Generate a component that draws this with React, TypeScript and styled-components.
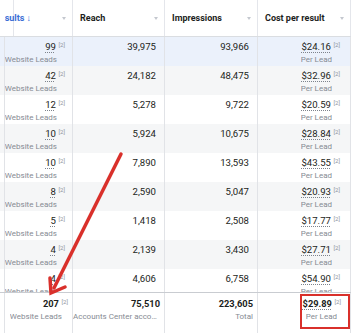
import styled, { createGlobalStyle } from "styled-components"

const GlobalStyle = createGlobalStyle`
  html, body {
    margin: 0;
    padding: 0;
    background: #fff;
  }
  body {
    font-family: Roboto, "Liberation Sans", Arial, sans-serif;
    width: 356px;
    height: 333px;
    overflow: hidden;
  }
`

const COLS = "5px 68px 92px 93px 93px"

const Page = styled.div`
  position: relative;
  width: 356px;
  height: 333px;
  overflow: hidden;
  background: #fff;
`

const Table = styled.div`
  width: 351px;
  display: flex;
  flex-direction: column;
`

const HeaderRow = styled.div`
  display: grid;
  grid-template-columns: ${COLS};
  height: 36px;
  border-bottom: 1px solid #dadde1;
  background: #fff;
`

const HeadCell = styled.div<{ $first?: boolean }>`
  display: flex;
  align-items: center;
  justify-content: space-between;
  padding: 0 6px 0 ${p => (p.$first ? "0" : "7px")};
  border-right: 1px solid #e4e6eb;
  overflow: hidden;
  white-space: nowrap;
`

const HeadLabel = styled.span<{ $sorted?: boolean }>`
  font-size: 9px;
  font-weight: 700;
  color: ${p => (p.$sorted ? "#3b6fd6" : "#1c1e21")};
  margin-left: ${p => (p.$sorted ? "-11px" : "0")};
`

const Caret = styled.span`
  width: 0;
  height: 0;
  border-left: 2.5px solid transparent;
  border-right: 2.5px solid transparent;
  border-top: 3px solid #c4c8cf;
  flex-shrink: 0;
`

const Body = styled.div`
  height: 255px;
  overflow: hidden;
`

const Row = styled.div<{ $bg: string }>`
  display: grid;
  grid-template-columns: ${COLS};
  height: 29px;
  background: ${p => p.$bg};
`

const FooterRow = styled.div`
  display: grid;
  grid-template-columns: ${COLS};
  height: 40px;
  border-top: 1px solid #c9ccd1;
  background: #fff;
`

const Cell = styled.div<{ $pr: number; $pt?: number }>`
  position: relative;
  display: flex;
  flex-direction: column;
  align-items: flex-end;
  padding: ${p => p.$pt ?? 3}px ${p => p.$pr}px 0 0;
  border-right: 1px solid #e1e3e7;
  min-width: 0;
`

const Line = styled.div`
  display: flex;
  align-items: flex-start;
  height: 13px;
  line-height: 13px;
`

const Value = styled.span<{ $link?: boolean; $bold?: boolean }>`
  font-size: ${p => (p.$bold ? "9.3px" : "9.6px")};
  font-weight: ${p => (p.$bold ? 700 : 400)};
  color: #1c1e21;
  text-decoration: ${p => (p.$link ? "underline dotted #7d838c" : "none")};
  text-underline-offset: 1.5px;
`

const Sup = styled.span`
  font-size: 6px;
  line-height: 9px;
  color: #8d949e;
  margin-left: 2.5px;
`

const Sub = styled.div<{ $mr: number }>`
  font-size: 8px;
  line-height: 14px;
  color: #868b93;
  margin-right: ${p => p.$mr}px;
  max-width: 100%;
  overflow: hidden;
  text-overflow: ellipsis;
  white-space: nowrap;
`

const Highlight = styled.div`
  position: absolute;
  left: 42px;
  right: 0;
  top: 1px;
  bottom: 4px;
  border: 2px solid #d9302b;
`

const Overlay = styled.svg`
  position: absolute;
  left: 0;
  top: 0;
  pointer-events: none;
`

const rows = [
  ["99", "39,975", "93,966", "$24.16"],
  ["42", "24,182", "48,475", "$32.96"],
  ["12", "5,278", "9,722", "$20.59"],
  ["10", "5,924", "10,675", "$28.84"],
  ["10", "7,890", "13,593", "$43.55"],
  ["8", "2,590", "5,047", "$20.93"],
  ["5", "1,418", "2,508", "$17.77"],
  ["4", "2,139", "3,430", "$27.71"],
  ["4", "4,606", "6,758", "$54.90"],
]

const rowBg = (i: number) => (i === 0 ? "#ebf1fb" : i % 2 === 1 ? "#f5f6f7" : "#fff")

const headers = ["Reach", "Impressions", "Cost per result"]

export default function App() {
  return (
    <Page>
      <GlobalStyle />
      <Table>
        <HeaderRow>
          <HeadCell />
          <HeadCell $first>
            <HeadLabel $sorted>Results ↓</HeadLabel>
            <Caret />
          </HeadCell>
          {headers.map(h => (
            <HeadCell key={h}>
              <HeadLabel>{h}</HeadLabel>
              <Caret />
            </HeadCell>
          ))}
        </HeaderRow>

        <Body>
          {rows.map((r, i) => (
            <Row key={i} $bg={rowBg(i)}>
              <Cell $pr={0} />
              <Cell $pr={7}>
                <Line>
                  <Value $link>{r[0]}</Value>
                  <Sup>[2]</Sup>
                </Line>
                <Sub $mr={8}>Website Leads</Sub>
              </Cell>
              <Cell $pr={8}>
                <Line>
                  <Value>{r[1]}</Value>
                </Line>
              </Cell>
              <Cell $pr={8}>
                <Line>
                  <Value>{r[2]}</Value>
                </Line>
              </Cell>
              <Cell $pr={10}>
                <Line>
                  <Value $link>{r[3]}</Value>
                  <Sup>[2]</Sup>
                </Line>
                <Sub $mr={8}>Per Lead</Sub>
              </Cell>
            </Row>
          ))}
        </Body>

        <FooterRow>
          <Cell $pr={0} $pt={4} />
          <Cell $pr={4} $pt={4}>
            <Line>
              <Value $bold>207</Value>
              <Sup>[2]</Sup>
            </Line>
            <Sub $mr={6}>Website Leads</Sub>
          </Cell>
          <Cell $pr={4} $pt={4}>
            <Line>
              <Value $bold>75,510</Value>
            </Line>
            <Sub $mr={0}>Accounts Center accounts</Sub>
          </Cell>
          <Cell $pr={4} $pt={4}>
            <Line>
              <Value $bold>223,605</Value>
            </Line>
            <Sub $mr={0}>Total</Sub>
          </Cell>
          <Cell $pr={9} $pt={4}>
            <Line>
              <Value $bold $link>$29.89</Value>
              <Sup>[2]</Sup>
            </Line>
            <Sub $mr={4}>Per Lead</Sub>
            <Highlight />
          </Cell>
        </FooterRow>
      </Table>

      <Overlay width="356" height="333" viewBox="0 0 356 333">
        <line x1="121" y1="154" x2="54" y2="288" stroke="#d9302b" strokeWidth="3.5" strokeLinecap="round" />
        <polyline
          points="50,278 51,293 65,287"
          fill="none"
          stroke="#d9302b"
          strokeWidth="3.5"
          strokeLinecap="round"
          strokeLinejoin="miter"
        />
      </Overlay>
    </Page>
  )
}
